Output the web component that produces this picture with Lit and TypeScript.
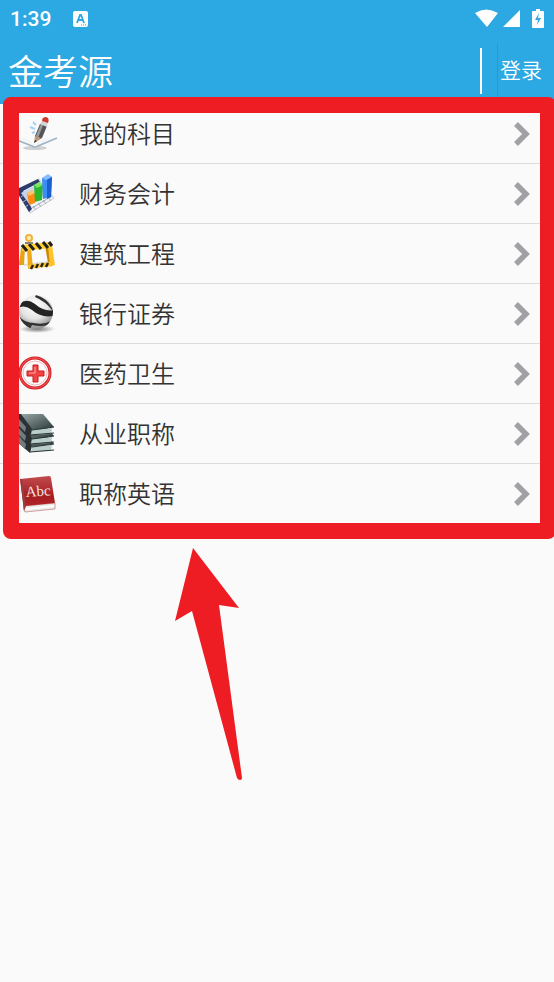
import { LitElement, html, svg, css } from "lit";
import { customElement } from "lit/decorators.js";

const pen = svg`
  <ellipse cx="23" cy="38" rx="12" ry="2" fill="#b9bcc0" opacity=".7"/>
  <path d="M2 29 L12 27 L23 34 L34 28 L45 28 L25 37 Q23 38 21 37Z" fill="#f4f5f6"/>
  <path d="M2 29 L20 36 Q23 38 26 36 L45 28" fill="none" stroke="#9fb4c3" stroke-width="1.6"/>
  <path d="M21 12l3 3M18 17l5 2M20 23l3-1" stroke="#a9d3ee" stroke-width="2.2"/>
  <path d="M23 32 L23 26 L28 14 L35 16 L30 28Z" fill="#55565a"/>
  <path d="M24 26 L29 14 L31 15 L26 28Z" fill="#9a9b9f"/>
  <path d="M22 33 L23 26 L29 28Z" fill="#c09a78"/>
  <path d="M22 33 L23 30 L25 31Z" fill="#333"/>
  <path d="M28 14 L30 11 L36 12 L35 17Z" fill="#d5d6d8"/>
  <path d="M30 11 Q30 7 34 7 Q38 8 36 13Z" fill="#d1382c"/>`;

const chart = svg`
  <path d="M4 21 L27 9 L42 28 L18 43Z" fill="#f1f3f7" stroke="#c3c9d2"/>
  <path d="M5 19 L26 9 L28 12 L11 21 L20 39 L17 42 L5 22Z" fill="#2d3b6d"/>
  <path d="M9 23 L29 12 L37 23 L18 35Z" fill="#c9d4ea"/>
  <path d="M20 38l20-12M21 36l3 4M26 33l3 4M31 30l3 4M36 27l3 4" stroke="#a5abb5"/>
  <path d="M13 37l3-2M11 32l3-2M9 27l3-2" stroke="#a8b7dc"/>
  <path d="M15 23 L20 21 L23 24 L23 33 L17 35Z" fill="#ff8a14"/>
  <path d="M15 23 L20 20 L23 23 L17 26Z" fill="#ffc36a"/>
  <path d="M22 15 L27 13 L31 15 L30 30 L23 32Z" fill="#2bb52c"/>
  <path d="M22 15 L27 12 L31 15 L25 18Z" fill="#7be567"/>
  <path d="M30 8 L36 5 L40 7 L39 27 L31 29Z" fill="#3d8df5"/>
  <path d="M30 8 L36 4 L40 7 L34 10Z" fill="#86bdff"/>
  <path d="M35 10 L40 7 L39 27 L35 29Z" fill="#1a5fd0"/>`;

const barrier = svg`
  <path d="M12 35 L38 32" stroke="#ddd" stroke-width="2"/>
  <path d="M9 18 L13 18 L12 35 L7 35Z" fill="#e5a416"/>
  <path d="M15 18 L19 18 L21 38 L16 39Z" fill="#f0a818"/>
  <path d="M33 16 L37 16 L40 32 L36 33Z" fill="#c98a0c"/>
  <path d="M36 15 L40 15 L43 35 L38 36Z" fill="#ffc42b"/>
  <path d="M16 35 L40 32 L41 36 L17 39Z" fill="#f9c12b"/>
  <path d="M19 39l2-4M24 38l2-4M29 37l2-4M34 37l2-4" stroke="#26231d" stroke-width="2.4"/>
  <path d="M9 15 L39 12 L40 18 L10 21Z" fill="#ffd02e"/>
  <path d="M10 15l5 6M17 14l5 6M24 13l5 6M31 12l5 6M37 12l3 4" stroke="#23211d" stroke-width="3"/>
  <circle cx="17" cy="8" r="4" fill="#f3b13b"/>
  <circle cx="17" cy="8" r="2" fill="#fff0b8"/>
  <path d="M13 12h8v2h-8Z" fill="#8b8474"/>`;

const ball = svg`
  <defs>
    <radialGradient id="ball" cx=".45" cy=".3" r=".8">
      <stop offset="0" stop-color="#fff"/><stop offset=".5" stop-color="#e4e4e4"/>
      <stop offset="1" stop-color="#6f6f6f"/>
    </radialGradient>
    <radialGradient id="shade">
      <stop offset="0" stop-color="#777"/><stop offset="1" stop-color="#777" stop-opacity="0"/>
    </radialGradient>
    <clipPath id="round"><circle cx="24" cy="22" r="17"/></clipPath>
  </defs>
  <ellipse cx="25" cy="39" rx="18" ry="4" fill="url(#shade)"/>
  <circle cx="24" cy="22" r="17" fill="url(#ball)"/>
  <g clip-path="url(#round)">
    <path d="M6 15 Q14 7 23 14 Q32 22 42 20 L41 26 Q29 28 20 20 Q13 14 6 18Z" fill="#242424"/>
    <path d="M24 5 Q35 8 40 18 L41 21 Q33 11 23 7Z" fill="#303030"/>
    <path d="M6 25 Q12 33 22 33 Q32 35 39 31 L36 35 Q28 37 20 35 Q19 37 18 39 Q10 33 6 28Z" fill="#333"/>
  </g>`;

const medical = svg`
  <circle cx="23" cy="23" r="15" fill="#fff" stroke="#c8191f" stroke-width="3"/>
  <circle cx="23" cy="23" r="15" fill="none" stroke="#f4494c" stroke-width="1.4"/>
  <circle cx="23" cy="23" r="12" fill="#fffafa" stroke="#f0b9ba" stroke-width="1"/>
  <path d="M21 15h5v6h6v5h-6v6h-5v-6h-6v-5h6Z" fill="#f24443" stroke="#c8191f"/>
  <path d="M23 17v6h-6" fill="none" stroke="#ffaaa5" stroke-width="1"/>`;

const bookLayer = (y: number) => svg`
  <g transform="translate(0 ${y})">
    <path d="M8 4 L31 4 L42 17 L20 20Z" fill="url(#cover)"/>
    <path d="M20 20 L40 18 L39 24 L19 25Z" fill="#b9cecb"/>
    <path d="M20 20 L42 17 M18 25 L42 23" stroke="#2b3738" stroke-width="1.2"/>
    <path d="M4 4 L9 4 L20 19 L18 26 L4 14Z" fill="#2b3132"/>
    <path d="M6 8 L14 17 L13 22 L6 15Z" fill="#717d7d"/>
  </g>`;

const books = svg`
  <defs><linearGradient id="cover" x1="0" y1="0" x2="1" y2="1">
    <stop offset="0" stop-color="#98a9a8"/><stop offset="1" stop-color="#293536"/>
  </linearGradient></defs>
  ${[17, 9, 0].map(bookLayer)}`;

const dictionary = svg`
  <defs><linearGradient id="red" x1="0" y1="0" x2="0" y2="1">
    <stop offset="0" stop-color="#c04b4e"/><stop offset=".6" stop-color="#a51d22"/>
    <stop offset="1" stop-color="#b8272b"/>
  </linearGradient></defs>
  <path d="M12 36 L43 33 L43 39 L13 42 Q11 40 12 36Z" fill="#e9e9e9" stroke="#c98a8b" stroke-width=".8"/>
  <path d="M14 39 L42 36" stroke="#fff" stroke-width="2"/>
  <path d="M8 9 L37 6 Q39 6 39 8 L43 33 L13 36 L12 40Z" fill="url(#red)"/>
  <path d="M8 9 L10 9 L14 36 L12 41Z" fill="#9c3a3d"/>
  <text x="14" y="27" class="abc" transform="rotate(-4 14 27)">Abc</text>`;

const subjects = [
  { name: "我的科目", icon: pen },
  { name: "财务会计", icon: chart },
  { name: "建筑工程", icon: barrier },
  { name: "银行证券", icon: ball },
  { name: "医药卫生", icon: medical },
  { name: "从业职称", icon: books },
  { name: "职称英语", icon: dictionary },
];

@customElement("app-root")
export class AppRoot extends LitElement {
  static styles = css`
    :host {
      display: flex;
      flex-direction: column;
      min-height: 100vh;
      overflow: hidden;
      background: #fafafa;
      color: #333;
      font-family: Roboto, "Noto Sans CJK SC", sans-serif;
    }
    svg { display: block; flex: none; }
    .top { background: #2ca8e2; color: #fff; }
    .status {
      display: flex;
      align-items: center;
      height: 38px;
      padding: 0 10px;
    }
    .time { font-size: 21px; font-weight: 500; line-height: 38px; }
    .notice { margin-left: 22px; }
    .signals { display: flex; gap: 5px; margin-left: auto; }
    .battery { margin-left: 6px; }
    .bar {
      display: flex;
      align-items: center;
      height: 66px;
      padding-left: 8px;
    }
    h1 {
      flex: 1;
      margin: 0;
      padding-bottom: 2px;
      font: 350 35px/48px "Noto Sans CJK SC", sans-serif;
    }
    .divider { width: 2px; height: 46px; margin-right: 15px; background: #fff; }
    .login {
      align-self: stretch;
      margin-top: 6px;
      padding: 0 12px 10px 2px;
      border: 0;
      border-left: 1px solid #2799cf;
      background: none;
      color: inherit;
      font: 350 21px/32px "Noto Sans CJK SC", sans-serif;
      cursor: pointer;
    }
    .list { position: relative; }
    ul { margin: 0; padding: 0; list-style: none; }
    .row {
      display: flex;
      align-items: center;
      height: 59px;
      padding: 0 22px 0 12px;
      border-bottom: 1px solid #dcdcdc;
      color: inherit;
      text-decoration: none;
      font: 350 24px/36px "Noto Sans CJK SC", sans-serif;
    }
    li:last-child .row { border-color: transparent; }
    .name { flex: 1; margin-left: 19px; padding-bottom: 2px; }
    .abc { font: 15px "Liberation Serif", serif; fill: #f6e4e2; }
    .frame {
      position: absolute;
      inset: -7px -2px -15px 3px;
      border: 16px solid #ee1c23;
      border-radius: 8px;
      pointer-events: none;
    }
    .arrow { margin: 20px 0 0 170px; }
  `;

  render() {
    return html`
      <header class="top">
        <div class="status">
          <span class="time">1:39</span>
          <svg class="notice" width="15" height="16" viewBox="0 0 15 16">
            <rect width="15" height="16" rx="2" fill="#fff"/>
            <path d="M4 12 L7 4 H8 L11 12 M5 9 H10" fill="none" stroke="#2ca8e2" stroke-width="1.8"/>
            <path d="M8 14h1m1 0h1m1 0h1" stroke="#2ca8e2"/>
          </svg>
          <div class="signals">
            <svg width="23" height="20" viewBox="0 0 23 20">
              <path d="M0 4 Q11 -3 23 4 L12 18Z" fill="#fff"/>
            </svg>
            <svg width="18" height="20" viewBox="0 0 18 20">
              <path d="M17 1 V18 H0Z" fill="#fff"/>
            </svg>
            <svg class="battery" width="12" height="20" viewBox="0 0 12 20">
              <path d="M4 0h4v2h3q1 0 1 1v15q0 1-1 1H1q-1 0-1-1V3q0-1 1-1h3Z" fill="#fff"/>
              <path d="M7 4 L3 11 H6 L5 16 L9 9 H6Z" fill="#2ca8e2"/>
            </svg>
          </div>
        </div>
        <div class="bar">
          <h1>金考源</h1>
          <span class="divider"></span>
          <button class="login" type="button">登录</button>
        </div>
      </header>
      <nav class="list">
        <ul>
          ${subjects.map(
            (s) => html`<li>
              <a class="row" href="#">
                <svg width="48" height="48" viewBox="0 0 48 48" aria-hidden="true">${s.icon}</svg>
                <span class="name">${s.name}</span>
                <svg width="20" height="28" viewBox="0 0 20 28" aria-hidden="true">
                  <path d="M4 4 L14 14 L4 24" fill="none" stroke="#a0a1a5" stroke-width="5.5"/>
                </svg>
              </a>
            </li>`
          )}
        </ul>
        <div class="frame"></div>
      </nav>
      <svg class="arrow" width="80" height="240" viewBox="0 0 80 240" aria-hidden="true">
        <path d="M23 4 L69 64 L49 61 L72 234 Q72 236 70 236 Q68 236 67 234 L22 67 L5 77Z" fill="#ee1c23"/>
      </svg>
    `;
  }
}
